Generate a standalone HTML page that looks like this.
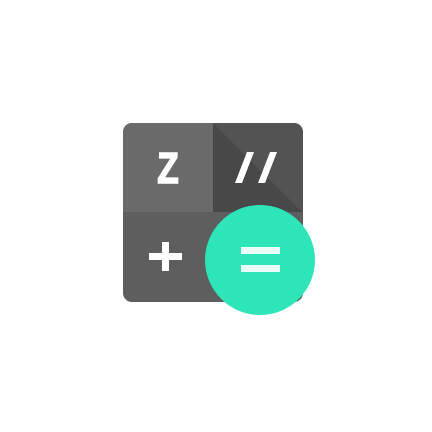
<!DOCTYPE html>
<html><head><style>
html,body{margin:0;padding:0;background:#fff;width:432px;height:432px;overflow:hidden}
</style></head><body>
<svg width="432" height="432" viewBox="0 0 432 432" xmlns="http://www.w3.org/2000/svg">
<defs><clipPath id="c"><rect x="123" y="123" width="180" height="179" rx="9"/></clipPath></defs>
<g clip-path="url(#c)">
<rect x="123" y="123" width="180" height="179" fill="#5e5e5e"/>
<rect x="123" y="123" width="90" height="89" fill="#6a6a6a"/>
<rect x="213" y="123" width="90" height="89" fill="#535353"/>
<polygon points="213,123 302,212 213,212" fill="#484848"/>
</g>
<text transform="translate(168,183) scale(0.8,1)" font-family="Liberation Sans, sans-serif" font-weight="bold" font-size="44" fill="#fff" stroke="#fff" stroke-width="1.5" text-anchor="middle">Z</text>
<polygon points="247,152 254,152 242,183 235,183" fill="#fff"/>
<polygon points="270,152 277,152 265,183 258,183" fill="#fff"/>
<rect x="149" y="253" width="33" height="7" fill="#fff"/>
<rect x="162" y="242" width="7" height="29" fill="#fff"/>
<circle cx="260" cy="260" r="55" fill="#2ee5b9"/>
<rect x="241" y="247" width="39" height="7" fill="#fff" opacity="0.9"/>
<rect x="241" y="265" width="39" height="7" fill="#fff" opacity="0.9"/>
</svg>
</body></html>
